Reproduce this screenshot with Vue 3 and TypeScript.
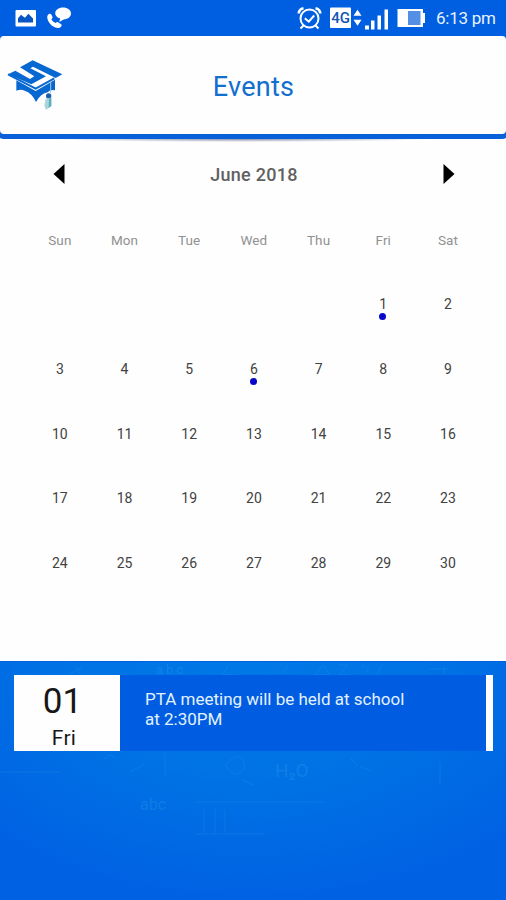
<script setup lang="ts">
interface Day {
  label: string
  marked: boolean
}

const weekdays: string[] = ['Sun', 'Mon', 'Tue', 'Wed', 'Thu', 'Fri', 'Sat']
const firstWeekday = 5
const eventDays = new Set<number>([1, 6])

const days: Day[] = [
  ...Array.from({ length: firstWeekday }, () => ({ label: '', marked: false })),
  ...Array.from({ length: 30 }, (_, i) => ({ label: String(i + 1), marked: eventDays.has(i + 1) })),
]
</script>

<template>
  <div class="screen">
    <div class="status">
      <svg class="status-left" width="72" height="36" viewBox="0 0 72 36">
        <rect x="15.5" y="10" width="20.5" height="16.5" rx="1" fill="#fff" />
        <path d="M18 22.5v-4.2l3-3.6 2.2 1.8 1.8 1.3 3.4-4 4.6 4.6v4.1z" fill="#0a55c4" />
        <path d="M48.6 14.2c1.1-.8 2.4-.4 3 .8l.9 2c.3.9-.6 1.5-1.2 2.1.8 2 2.4 3.3 4.4 4 .7-.7 1.3-1.3 2.2-.9l3 1.7c1 .7.9 1.7.2 2.6-1.5 1.9-3.8 1.9-6.3.8-4-1.9-7-5.8-7.5-9.4-.2-1.7.2-3 1.3-3.7z" fill="#fff" />
        <path d="M63 7.5c4.5 0 8 2.5 8 6s-3.2 5.6-6.8 5.800l-5 2.700 1-3.500c-3-.9-5-2.700-5-5 0-3.500 3.400-6 7.800-6z" fill="#fff" />
      </svg>
      <div class="status-right">
        <svg width="136" height="36" viewBox="0 0 136 36">
          <g fill="none" stroke="#fff" stroke-width="2">
            <circle cx="19.5" cy="18.5" r="9" />
            <path d="M14.8 18.2l4 3.5 5.4-6.2" />
            <path d="M13.5 25.5l-3 3M25.5 25.5l3 3" />
            <path d="M8.7 13.5q.3-4.3 4.8-5.2M30.3 13.5q-.3-4.300-4.800-5.200" stroke-width="2.6" />
          </g>
          <rect x="40" y="7.5" width="21" height="20.5" rx="1" fill="#fff" />
          <text x="50.5" y="23" text-anchor="middle" class="network">4G</text>
          <path d="M63.5 15.7l4-6 4 6zM63.5 19.7l4 6 4-6z" fill="#fff" />
          <path d="M75 25.5h4v4h-4zM81 20.5h3.5v9H81zM87.5 15.5H91v14h-3.5zM94.5 9.5H98v20h-3.5z" fill="#fff" />
          <path d="M107.5 9h25.5v4h2v10h-2v4h-25.5z" fill="#fff" />
          <rect x="118" y="11" width="12.5" height="14" fill="#528fe5" />
        </svg>
        <span class="time">6:13 pm</span>
      </div>
    </div>

    <header class="header">
      <svg class="logo" width="56" height="53" viewBox="21 72 168 159">
        <path d="M49 136L107 168L165 134V166Q152 162 143 172Q122 176 108 201Q96 174 74 167Q62 162 49 167Z" fill="#0868d2" />
        <path d="M98 76L187 118L107 164L24 118Z" fill="#fefefe" />
        <path d="M24 118L46 107L90 132L103 124L60 97L98 76L187 118L167 129L99 95L91 100L138 124L94 148Z" fill="#0868d2" />
        <path d="M24 118L107 161L163 130" fill="none" stroke="#0868d2" stroke-width="6" />
        <path d="M152 140V174" stroke="#9ac8ed" stroke-width="3" />
        <circle cx="146" cy="183" r="8" fill="#1760ac" />
        <path d="M137 191L154 188V213L138 225L133 211Z" fill="#a9d5df" />
        <path d="M147 191L154 188V213L146 219Z" fill="#62aebf" />
      </svg>
      <h1>Events</h1>
    </header>

    <main class="calendar">
      <div class="month">
        <svg width="12" height="22" viewBox="0 0 12 22"><path d="M11.5 1v20L.5 11z" /></svg>
        <h2>June 2018</h2>
        <svg width="12" height="22" viewBox="0 0 12 22"><path d="M.5 1v20l11-10z" /></svg>
      </div>
      <div class="grid">
        <div v-for="name in weekdays" :key="name" class="cell weekday">{{ name }}</div>
        <div v-for="(day, i) in days" :key="i" class="cell">
          {{ day.label }}
          <i v-if="day.marked" class="dot"></i>
        </div>
      </div>
    </main>

    <section class="agenda">
      <svg class="doodles" width="506" height="239" viewBox="0 0 506 239" aria-hidden="true">
        <g class="chalk">
          <text x="156" y="12" font-size="13" letter-spacing="3">abc</text>
          <text x="275" y="115" font-size="19">H₂O</text>
          <text x="140" y="148" font-size="16">abc</text>
        </g>
        <g fill="none" stroke="#50b5f0" stroke-width="1">
          <path d="M70 12l12-7M75 5l6 7M228 3l-5 10h12M282 12l6-9M315 13l8-10 7 10zM338 3h10l-9 10h10M362 4q9 0 5 7M382 3l-5 10M430 7h18M444 4v8" />
          <path d="M0 110h60M165 90v24M130 110l15-8M225 103q16-17 20 1q-8 17-20-1M242 118l12 5M195 140h130M195 172h70M360 104l11 5M440 100v22" />
          <path d="M204 147v24M215 147v24M225 147v24M104 97q6-8 12 0M350 96l8 8" />
        </g>
      </svg>
      <article class="event">
        <div class="date">
          <span class="day">01</span>
          <span class="dow">Fri</span>
        </div>
        <p>PTA meeting will be held at school<br />at 2:30PM</p>
      </article>
    </section>
  </div>
</template>

<style>
body {
  margin: 0;
}
</style>

<style scoped>
.screen {
  display: flex;
  flex-direction: column;
  width: 506px;
  height: 900px;
  overflow: hidden;
  background: #fefefe;
  font-family: Roboto, sans-serif;
}
.status {
  display: flex;
  justify-content: space-between;
  height: 36px;
  flex: none;
  background: #005fe0;
}
.status-right {
  display: flex;
  align-items: center;
  padding-right: 11px;
  gap: 10px;
  color: #e8f3ff;
}
.network {
  font: 500 15px Roboto, sans-serif;
  fill: #1555b5;
}
.time {
  font-size: 17px;
  line-height: 37px;
  letter-spacing: -0.25px;
  white-space: nowrap;
  width: 59px;
}
.header {
  position: relative;
  display: flex;
  align-items: center;
  height: 98px;
  flex: none;
  background: #fefefe;
  border-radius: 4px;
  box-shadow: 0 0 0 5px #0861d9;
  clip-path: inset(0 0 -5px 0);
}
.logo {
  margin: 0 0 0 7px;
}
h1 {
  flex: 1;
  margin: 4px 62px 0 0;
  text-align: center;
  font-size: 27px;
  line-height: 36px;
  font-weight: 400;
  letter-spacing: 0.3px;
  color: #126fcd;
}
.calendar {
  height: 522px;
  flex: none;
  margin-top: 5px;
  background: radial-gradient(ellipse 190px 3px at 240px 0, #8b91ad, transparent) no-repeat;
}
.month {
  display: flex;
  align-items: center;
  justify-content: space-between;
  height: 22px;
  padding: 24px 51px 0 53px;
}
h2 {
  margin: 2px 0 0;
  font-size: 18px;
  line-height: 22px;
  font-weight: 500;
  letter-spacing: 0.25px;
  color: #616161;
}
.grid {
  display: grid;
  grid-template-columns: repeat(7, 64.7px);
  grid-auto-rows: 64.7px;
  margin: 22.5px 0 0 27.5px;
}
.cell {
  position: relative;
  text-align: center;
  font-size: 14px;
  line-height: 65px;
  color: #424242;
}
.weekday {
  color: #919191;
  font-size: 13.5px;
  line-height: 64px;
  letter-spacing: 0.1px;
}
.dot {
  position: absolute;
  left: 28.5px;
  top: 41px;
  width: 7px;
  height: 7px;
  border-radius: 50%;
  background: #0808c9;
}
.agenda {
  position: relative;
  flex: 1;
  border-top: 1px solid #0062dc;
  background: radial-gradient(ellipse 380px 245px at 250px 0, #0078e6 0%, #0073e5 45%, #0061e2 100%);
}
.doodles {
  position: absolute;
  inset: 0;
  opacity: 0.16;
}
.chalk {
  font-family: Roboto, sans-serif;
  fill: #62c2f5;
}
.event {
  position: relative;
  display: flex;
  height: 76px;
  margin: 13px 13px 0 14px;
  background: #005de2;
  border-right: 7px solid #fff;
}
.date {
  width: 106px;
  display: flex;
  flex-direction: column;
  align-items: center;
  background: #fefefe;
  color: #171717;
}
.day {
  margin: 6px 9px 0 0;
  font-size: 35px;
  line-height: 41px;
}
.dow {
  margin: 5px 6px 0 0;
  font-size: 21px;
  line-height: 23px;
  letter-spacing: 0.3px;
}
p {
  margin: 14px 0 0 25px;
  font-size: 17px;
  line-height: 20px;
  color: #e3f2ff;
}
</style>
